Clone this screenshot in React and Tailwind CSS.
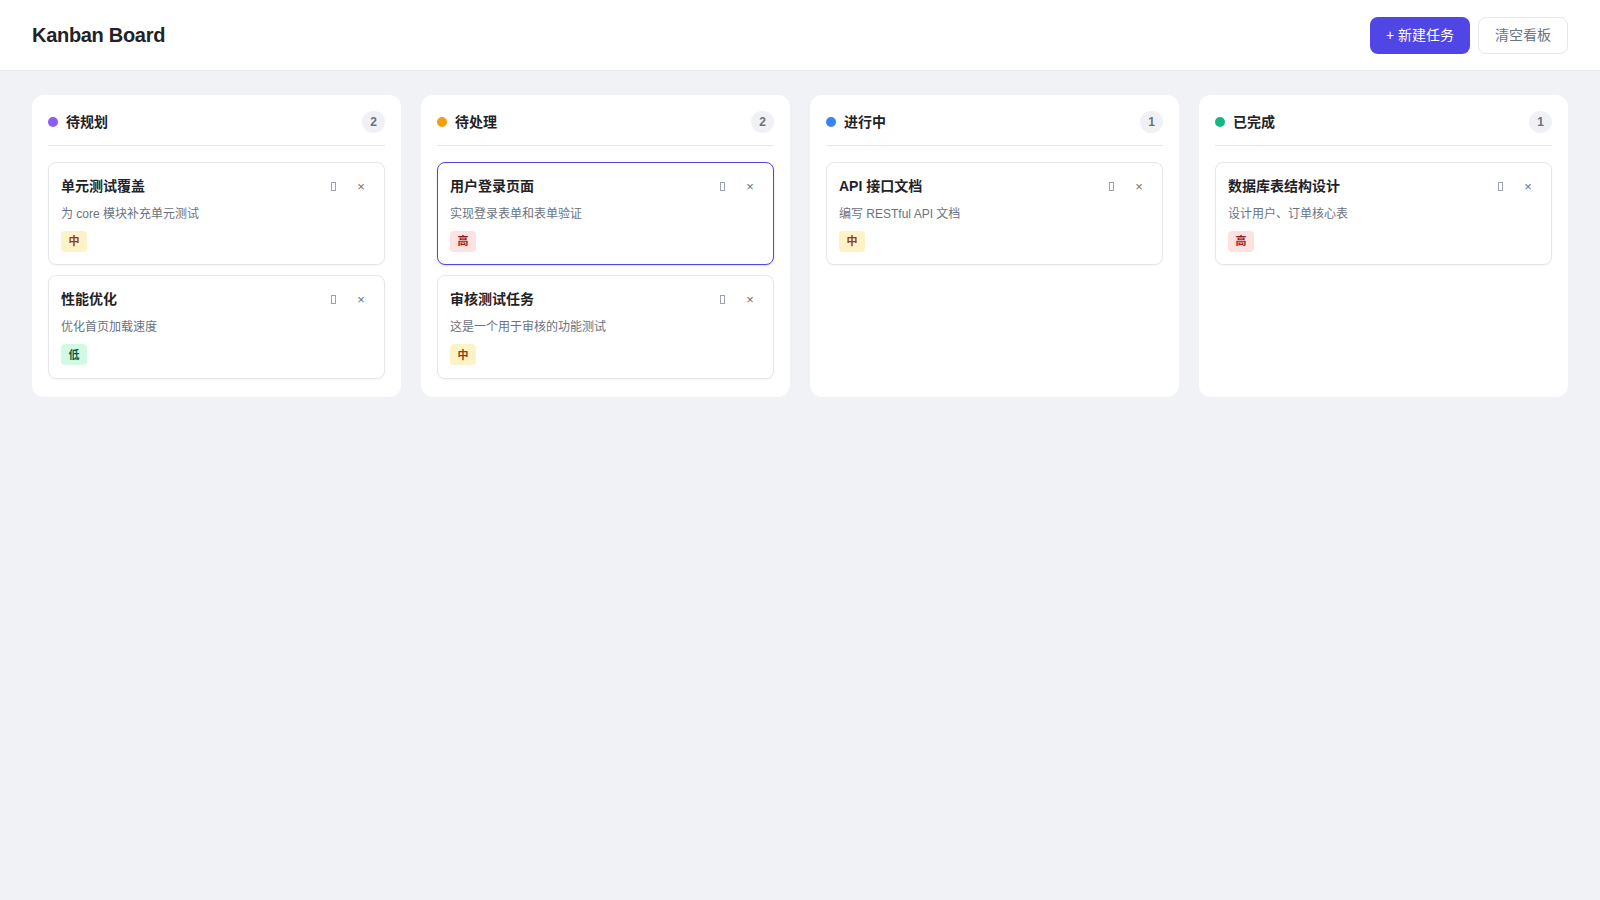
import React from 'react';

const font = { fontFamily: '"Liberation Sans", "Noto Sans CJK SC", sans-serif' };

const columns = [
  {
    id: 'backlog',
    title: '待规划',
    dot: 'bg-[#8b5cf6]',
    tasks: [
      { id: 1, title: '单元测试覆盖', desc: '为 core 模块补充单元测试', priority: 'medium' },
      { id: 2, title: '性能优化', desc: '优化首页加载速度', priority: 'low' },
    ],
  },
  {
    id: 'todo',
    title: '待处理',
    dot: 'bg-[#f59e0b]',
    tasks: [
      { id: 3, title: '用户登录页面', desc: '实现登录表单和表单验证', priority: 'high', active: true },
      { id: 4, title: '审核测试任务', desc: '这是一个用于审核的功能测试', priority: 'medium' },
    ],
  },
  {
    id: 'doing',
    title: '进行中',
    dot: 'bg-[#3b82f6]',
    tasks: [{ id: 5, title: 'API 接口文档', desc: '编写 RESTful API 文档', priority: 'medium' }],
  },
  {
    id: 'done',
    title: '已完成',
    dot: 'bg-[#10b981]',
    tasks: [{ id: 6, title: '数据库表结构设计', desc: '设计用户、订单核心表', priority: 'high' }],
  },
];

const priorityStyles = {
  high: { label: '高', cls: 'bg-[#fee2e2] text-[#991b1b]' },
  medium: { label: '中', cls: 'bg-[#fef3c7] text-[#92400e]' },
  low: { label: '低', cls: 'bg-[#d1fae5] text-[#065f46]' },
};

const TaskCard = ({ task }) => {
  const p = priorityStyles[task.priority];
  return (
    <div
      className={`rounded-lg bg-white px-3 pt-3 pb-3 ${
        task.active ? 'border border-[#4f46e5] shadow-sm' : 'border border-[#e5e7eb] shadow-[0_1px_2px_rgba(0,0,0,0.04)]'
      }`}
    >
      <div className="flex items-center justify-between">
        <h3 className="text-[14px] leading-[22px] font-bold text-[#1f2328]">{task.title}</h3>
        <div className="flex items-center gap-[6px] text-[#9ca3af]">
          <button className="flex h-[22px] w-[22px] items-center justify-center">
            <span className="block h-[9px] w-[5px] border border-[#9ca3af]" />
          </button>
          <button className="flex h-[22px] w-[22px] items-center justify-center text-[13px] leading-none text-[#6b7280]">
            ×
          </button>
        </div>
      </div>
      <p className="mt-2 text-[12px] leading-[18px] text-[#6b7280]">{task.desc}</p>
      <span className={`mt-2 inline-flex h-[21px] w-[26px] items-center justify-center rounded text-[11px] font-bold ${p.cls}`}>
        {p.label}
      </span>
    </div>
  );
};

const Column = ({ column }) => (
  <div className="rounded-xl bg-white px-4 pt-4 pb-[18px]">
    <div className="flex items-center justify-between border-b border-[#e5e7eb] pb-3">
      <div className="flex items-center gap-2">
        <span className={`h-[10px] w-[10px] rounded-full ${column.dot}`} />
        <h2 className="text-[14px] font-bold text-[#1f2328]">{column.title}</h2>
      </div>
      <span className="flex h-[22px] min-w-[23px] items-center justify-center rounded-full bg-[#f0f1f4] text-xs font-bold text-[#6b7280]">
        {column.tasks.length}
      </span>
    </div>
    <div className="mt-4 flex flex-col gap-[10px]">
      {column.tasks.map((task) => (
        <TaskCard key={task.id} task={task} />
      ))}
    </div>
  </div>
);

const App = () => {
  return (
    <div className="min-h-screen bg-[#f0f2f5]" style={font}>
      <header className="flex h-[71px] items-center justify-between border-b border-[#e5e7eb] bg-white px-8">
        <h1 className="text-[20px] font-bold tracking-[-0.3px] text-[#1f2328]">Kanban Board</h1>
        <div className="flex items-center gap-2">
          <button className="h-[37px] rounded-lg bg-[#4f46e5] px-4 text-sm text-white">+ 新建任务</button>
          <button className="h-[37px] rounded-lg border border-[#e5e7eb] bg-white px-4 text-sm text-[#6b7280]">清空看板</button>
        </div>
      </header>
      <main className="grid grid-cols-4 gap-5 px-8 pt-6">
        {columns.map((column) => (
          <Column key={column.id} column={column} />
        ))}
      </main>
    </div>
  );
};

export default App;
